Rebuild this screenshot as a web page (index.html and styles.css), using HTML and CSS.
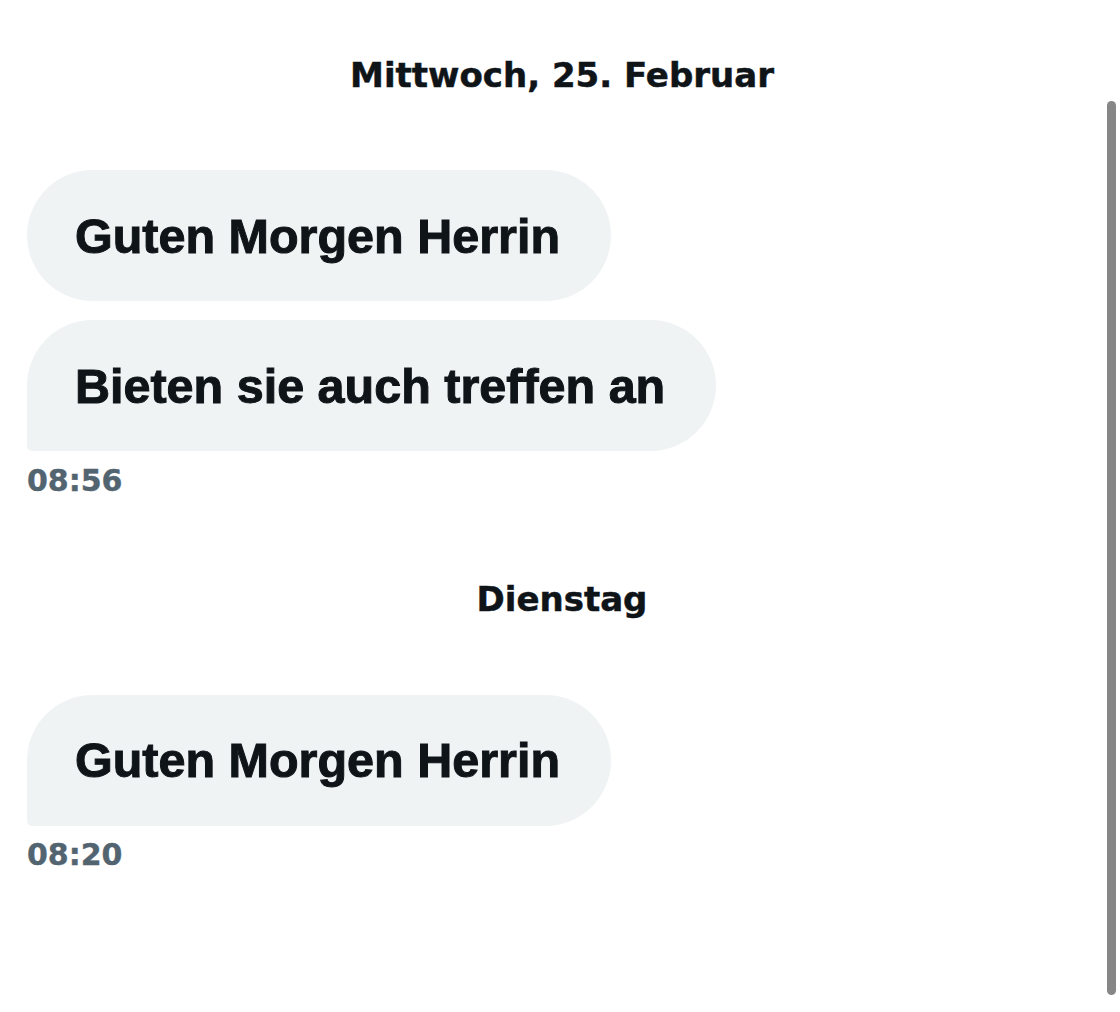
FILE: index.html
```html
<!DOCTYPE html>
<html lang="de">
<head>
<meta charset="utf-8">
<title>Nachrichten</title>
<link rel="stylesheet" href="styles.css">
</head>
<body>
<main class="chat">
  <div class="day day-first">Mittwoch, 25. Februar</div>
  <div class="group">
    <div class="bubble bubble-single">Guten Morgen Herrin</div>
    <div class="bubble bubble-last">Bieten sie auch treffen an</div>
    <div class="time">08:56</div>
  </div>
  <div class="day">Dienstag</div>
  <div class="group">
    <div class="bubble bubble-last">Guten Morgen Herrin</div>
    <div class="time">08:20</div>
  </div>
</main>
<div class="scrollbar"></div>
</body>
</html>
```
FILE: styles.css
```css
html, body {
  margin: 0;
  padding: 0;
  background: #ffffff;
}
body {
  width: 1120px;
  height: 1012px;
  overflow: hidden;
  position: relative;
  color: #0f1419;
}
.chat {
  padding: 55px 23px 0 27px;
  display: flex;
  flex-direction: column;
}
.day {
  font-family: "DejaVu Sans", sans-serif;
  font-weight: 700;
  font-size: 34px;
  line-height: 40px;
  text-align: center;
  margin-top: 81px;
  margin-bottom: 76px;
  -webkit-text-stroke: 0.5px currentColor;
}
.day-first {
  margin-top: 0;
  margin-bottom: 75px;
}
.group {
  display: flex;
  flex-direction: column;
  align-items: flex-start;
  gap: 19px;
}
.bubble {
  background: #eff3f4;
  font-family: "Liberation Sans", Arial, sans-serif;
  font-weight: 700;
  font-size: 48.5px;
  line-height: 58px;
  padding: 36.5px 51px 36.5px 48px;
  border-radius: 66px;
  white-space: nowrap;
  -webkit-text-stroke: 1px currentColor;
}
.bubble-last {
  border-bottom-left-radius: 5px;
}
.time {
  font-family: "DejaVu Sans", sans-serif;
  font-weight: 700;
  font-size: 30px;
  line-height: 34px;
  color: #536471;
  margin-top: -6.5px;
  -webkit-text-stroke: 0.4px currentColor;
}
.scrollbar {
  position: absolute;
  left: 1107px;
  top: 101px;
  width: 9px;
  height: 894px;
  border-radius: 5px;
  background: #868686;
}
```
